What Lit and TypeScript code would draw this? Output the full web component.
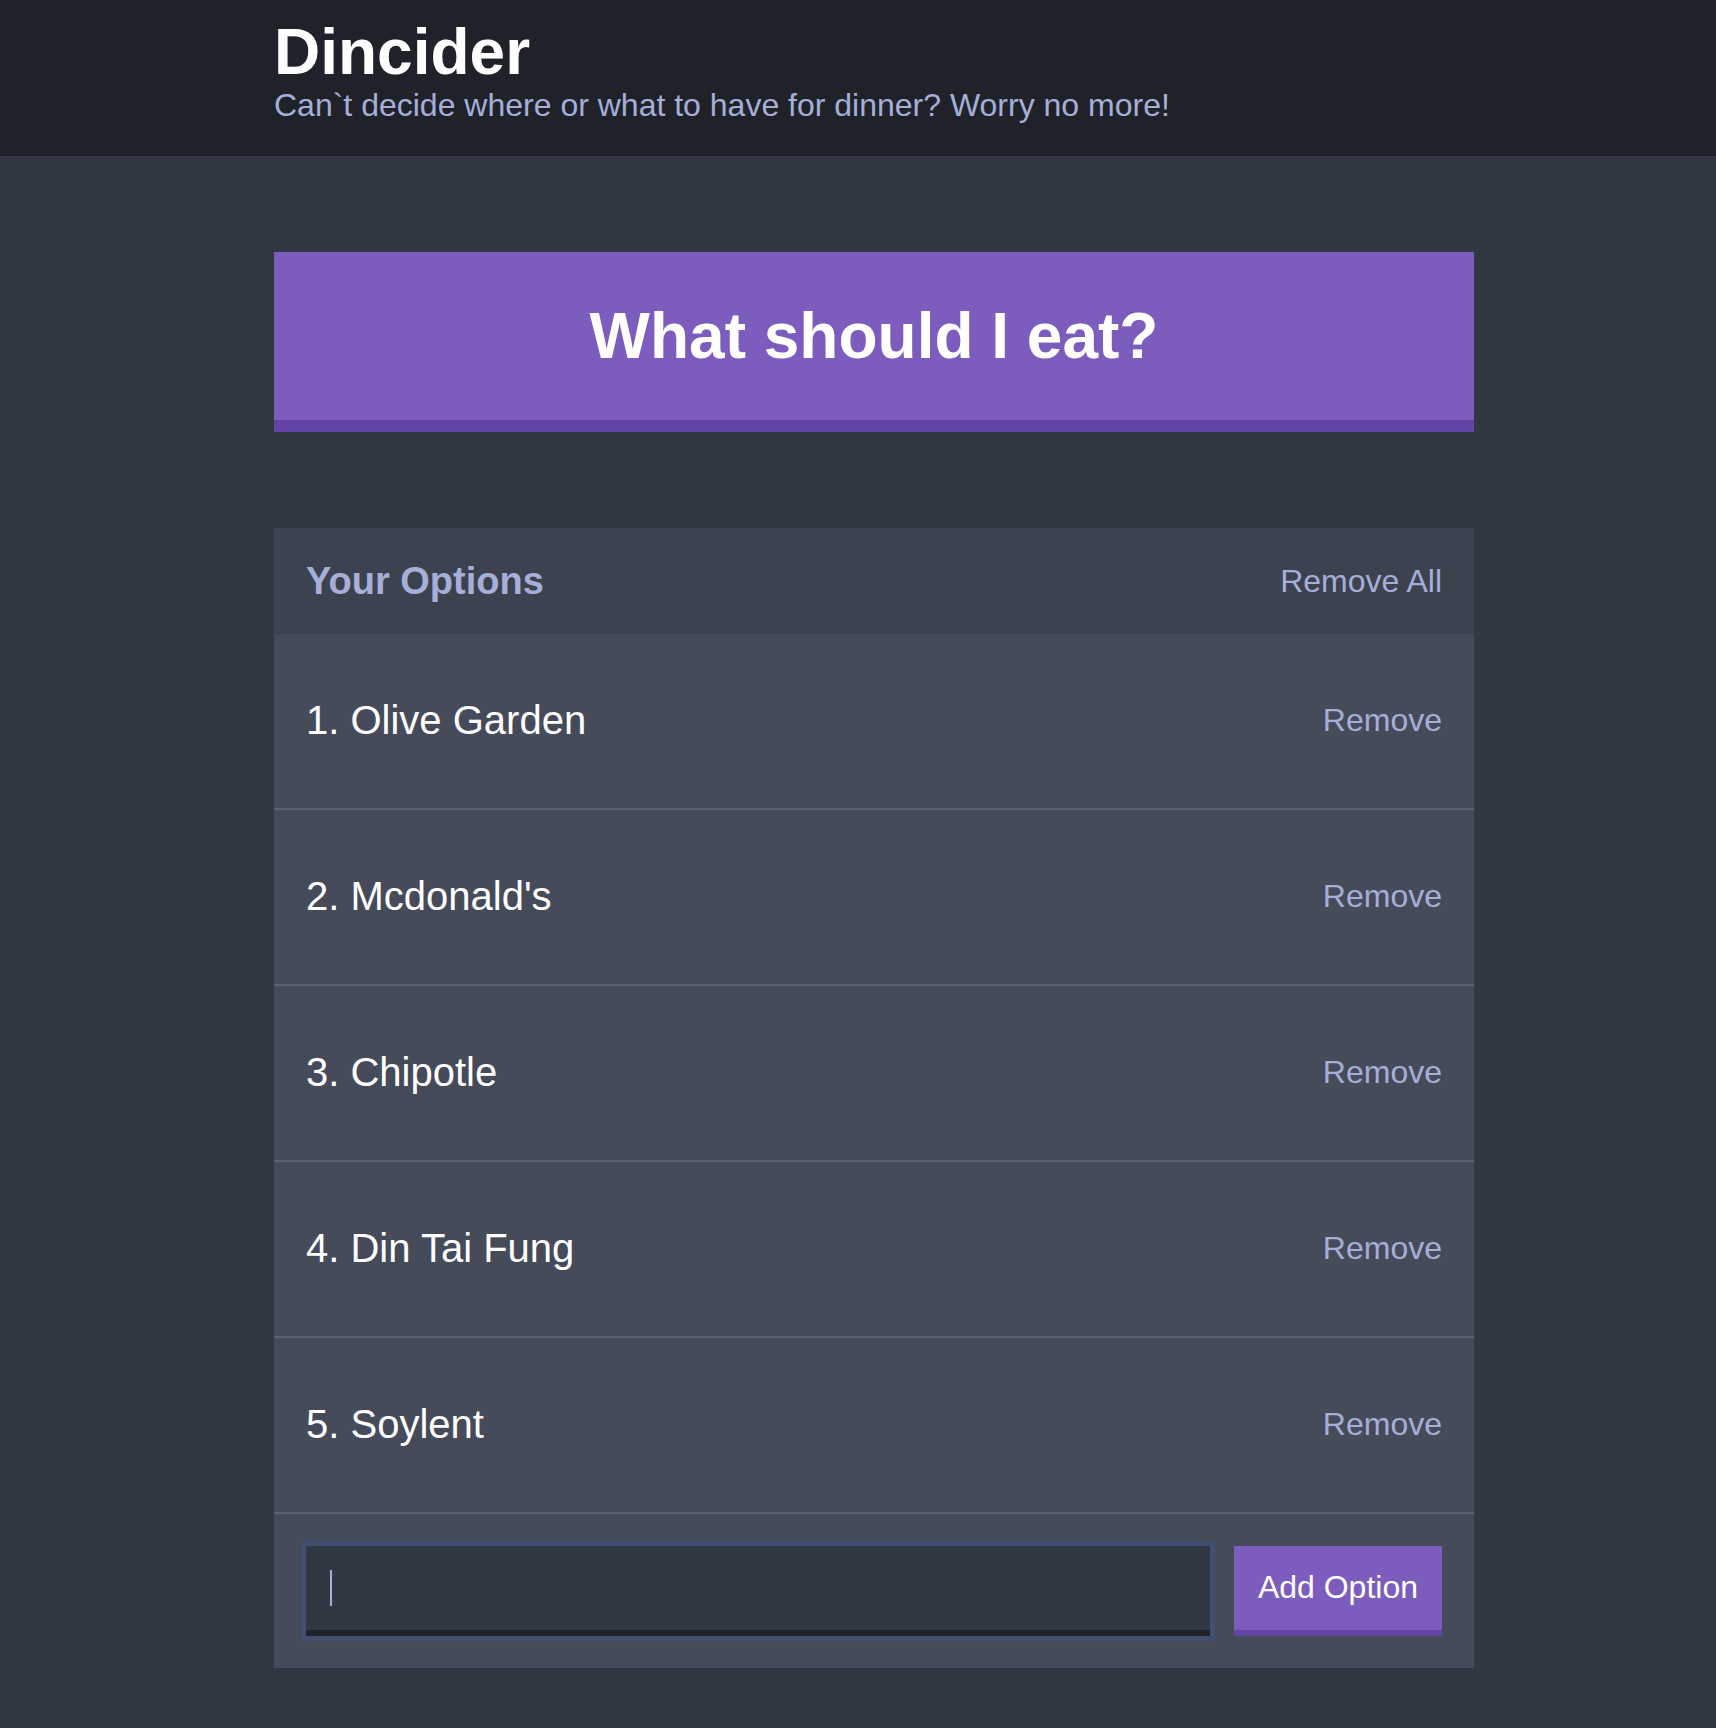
import { LitElement, html, css } from "lit";
import { customElement, property, state } from "lit/decorators.js";
import { createRef, ref } from "lit/directives/ref.js";

@customElement("option-row")
class OptionRow extends LitElement {
  static styles = css`
    :host {
      display: flex;
      justify-content: space-between;
      align-items: center;
      padding: 63px 32px 65px;
      border-bottom: 2px solid #5b6273;
    }
    .text {
      margin: 0;
      color: #fff;
      font-size: 40px;
      line-height: 46px;
      overflow-wrap: anywhere;
    }
    .link {
      padding: 0;
      border: none;
      background: none;
      color: #a5afd7;
      font: inherit;
      font-size: 32px;
      line-height: 36px;
      cursor: pointer;
    }
  `;

  @property({ type: Number }) count = 0;
  @property() text = "";

  render() {
    return html`
      <p class="text">${this.count}. ${this.text}</p>
      <button
        class="link"
        aria-label="Remove ${this.text}"
        @click=${() => this.dispatchEvent(new CustomEvent("remove"))}
      >Remove</button>
    `;
  }
}

@customElement("app-root")
class AppRoot extends LitElement {
  static styles = css`
    * {
      box-sizing: border-box;
    }
    :host {
      display: block;
      min-height: 100vh;
      background: #323744;
      color: #fff;
      font-family: "Liberation Sans", Helvetica, Arial, sans-serif;
      font-size: 32px;
    }
    .header {
      margin-bottom: 96px;
      padding: 16px 0 34px;
      background: #20222a;
    }
    .band {
      padding-left: 32px;
    }
    .container {
      max-width: 1200px;
      margin: 0 auto;
    }
    .title {
      margin: 0;
      font-size: 64px;
      line-height: 72px;
    }
    .subtitle {
      margin: 0;
      color: #a5afd7;
      font-size: 32px;
      font-weight: 400;
      line-height: 34px;
    }
    .big-button {
      display: block;
      width: 100%;
      margin-bottom: 96px;
      padding: 48px;
      border: none;
      border-bottom: 12px solid #6243a6;
      background: #7c5cbc;
      color: #fff;
      font: inherit;
      font-size: 64px;
      font-weight: 700;
      line-height: 72px;
      cursor: pointer;
    }
    .widget {
      background: #464b5a;
    }
    .widget-header {
      display: flex;
      justify-content: space-between;
      align-items: center;
      padding: 32px;
      background: #3c424f;
      color: #a5afd7;
    }
    .widget-title {
      margin: 0;
      font-size: 38px;
      line-height: 42px;
    }
    .link {
      padding: 0;
      border: none;
      background: none;
      color: #a5afd7;
      font: inherit;
      line-height: 36px;
      cursor: pointer;
    }
    .add-option {
      display: flex;
      gap: 24px;
      padding: 32px;
    }
    .field {
      position: relative;
      display: flex;
      flex: 1;
      min-width: 0;
    }
    .input {
      flex: 1;
      min-width: 0;
      padding: 24px;
      border: none;
      border-bottom: 6px solid #20222a;
      background: #323744;
      color: #a5afd7;
      font: inherit;
      line-height: 36px;
    }
    .input:focus {
      outline: 5px solid #42506f;
    }
    .input:placeholder-shown {
      caret-color: transparent;
    }
    .caret {
      position: absolute;
      top: 24px;
      left: 24px;
      width: 2px;
      height: 36px;
      background: #a5afd7;
      pointer-events: none;
      visibility: hidden;
    }
    .input:focus:placeholder-shown + .caret {
      visibility: visible;
    }
    .add {
      padding: 23px 24px 25px;
      border: none;
      border-bottom: 6px solid #6243a6;
      background: #7c5cbc;
      color: #fff;
      font: inherit;
      line-height: 36px;
      cursor: pointer;
    }
  `;

  @state() private options = [
    "Olive Garden",
    "Mcdonald's",
    "Chipotle",
    "Din Tai Fung",
    "Soylent",
  ];

  private field = createRef<HTMLInputElement>();

  firstUpdated() {
    this.field.value?.focus();
  }

  private pick() {
    alert(this.options[Math.floor(Math.random() * this.options.length)]);
  }

  private add(e: Event) {
    e.preventDefault();
    const input = this.field.value!;
    const text = input.value.trim();
    if (text && !this.options.includes(text)) {
      this.options = [...this.options, text];
      input.value = "";
    }
  }

  render() {
    return html`
      <header class="header band">
        <div class="container">
          <h1 class="title">Dincider</h1>
          <h2 class="subtitle">Can\`t decide where or what to have for dinner? Worry no more!</h2>
        </div>
      </header>
      <main class="band">
        <div class="container">
          <button class="big-button" ?disabled=${!this.options.length} @click=${this.pick}>
            What should I eat?
          </button>
          <section class="widget">
            <div class="widget-header">
              <h3 class="widget-title">Your Options</h3>
              <button class="link" @click=${() => (this.options = [])}>Remove All</button>
            </div>
            ${this.options.map(
              (text, i) => html`<option-row
                .count=${i + 1}
                .text=${text}
                @remove=${() => (this.options = this.options.filter((o) => o !== text))}
              ></option-row>`
            )}
            <form class="add-option" @submit=${this.add}>
              <div class="field">
                <input
                  class="input"
                  type="text"
                  aria-label="New option"
                  placeholder=" "
                  autocomplete="off"
                  ${ref(this.field)}
                />
                <span class="caret"></span>
              </div>
              <button class="add">Add Option</button>
            </form>
          </section>
        </div>
      </main>
    `;
  }
}
